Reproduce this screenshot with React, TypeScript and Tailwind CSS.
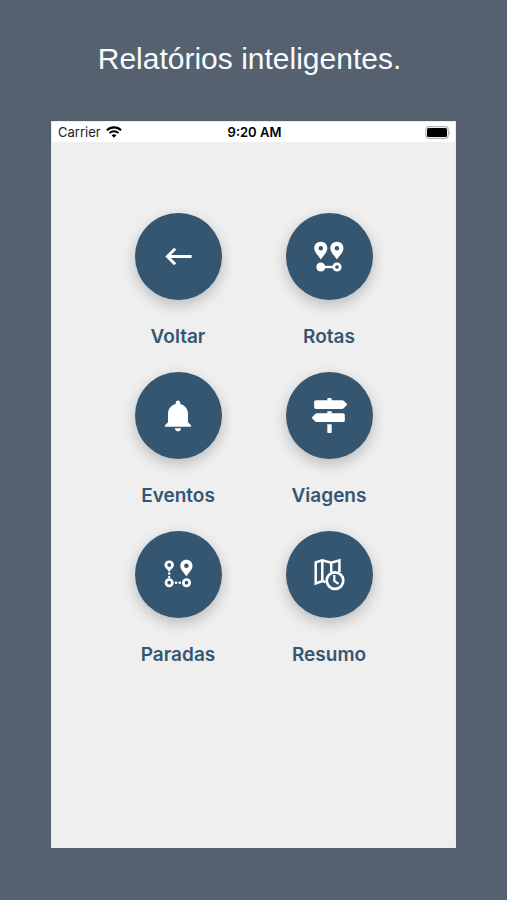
import type { ReactNode } from 'react';
import { FaMapSigns } from 'react-icons/fa';
import { IoMdNotifications } from 'react-icons/io';
import { MdKeyboardBackspace } from 'react-icons/md';

interface MenuItem {
  label: string;
  icon: ReactNode;
}

const RoutesIcon = () => (
  <svg width="35" height="35" viewBox="0 0 35 35" fill="none" aria-hidden="true">
    <path
      fill="currentColor"
      fillRule="evenodd"
      d="M8.8 2.800C5 2.800 2.200 5.600 2.200 9.200c0 4.200 4.400 7.400 6.600 11.400 2.200-4 6.600-7.200 6.600-11.400 0-3.600-2.800-6.400-6.600-6.400zm0 4.100a2.300 2.300 0 1 1 0 4.600 2.300 2.300 0 0 1 0-4.600z"
    />
    <path
      fill="currentColor"
      fillRule="evenodd"
      d="M24.900 2.800c-3.800 0-6.600 2.800-6.600 6.400 0 4.200 4.400 7.400 6.600 11.400 2.200-4 6.600-7.200 6.600-11.400 0-3.600-2.800-6.400-6.600-6.400zm0 4.100a2.300 2.300 0 1 1 0 4.600 2.300 2.300 0 0 1 0-4.600z"
    />
    <circle cx="8.8" cy="28" r="4.500" fill="currentColor" />
    <path d="M12 28h10" stroke="currentColor" strokeWidth="2.400" />
    <circle cx="25" cy="28" r="3.200" stroke="currentColor" strokeWidth="2.700" />
  </svg>
);

const StopsIcon = () => (
  <svg width="35" height="35" viewBox="0 0 35 35" fill="none" aria-hidden="true">
    <path
      fill="currentColor"
      fillRule="evenodd"
      d="M8.2 3.400c-2.600 0-4.700 2-4.700 4.500 0 2.700 3 4.200 4.700 7 1.700-2.800 4.700-4.300 4.700-7 0-2.500-2.100-4.500-4.700-4.500zm0 2.700a1.900 1.900 0 1 1 0 3.800 1.900 1.900 0 0 1 0-3.800z"
    />
    <path
      fill="currentColor"
      fillRule="evenodd"
      d="M25.400 2.700c-3.500 0-6.100 2.600-6.100 6 0 4 4 6.900 6.100 10.700 2.100-3.800 6.100-6.700 6.100-10.700 0-3.400-2.600-6-6.100-6zm0 3.700a2.300 2.300 0 1 1 0 4.600 2.300 2.300 0 0 1 0-4.600z"
    />
    <circle cx="8.2" cy="25.700" r="3.200" stroke="currentColor" strokeWidth="2.700" />
    <circle cx="25.500" cy="25.700" r="3.200" stroke="currentColor" strokeWidth="2.700" />
    <g fill="currentColor">
      <circle cx="8.2" cy="16.500" r="1.200" />
      <circle cx="8.2" cy="20" r="1.200" />
      <circle cx="15" cy="25.700" r="1.300" />
      <circle cx="18.700" cy="25.700" r="1.300" />
    </g>
  </svg>
);

const SummaryIcon = () => (
  <svg
    width="35"
    height="35"
    viewBox="0 0 35 35"
    fill="none"
    stroke="currentColor"
    strokeWidth="2.500"
    aria-hidden="true"
  >
    <path d="M13.500 25 10.300 24 3.700 26.400V5.400L10.300 3.400 19.200 5.700 27.400 3.400V15M10.300 3.400V24M19.200 5.700V15.500" />
    <circle cx="23" cy="23.600" r="8.300" strokeWidth="2.700" />
    <path d="M22.300 18V24L26.500 26.900" strokeWidth="2.200" />
  </svg>
);

const WifiIcon = () => (
  <svg width="16" height="12" viewBox="0 0 16 12" fill="none" aria-label="Wi-Fi">
    <path d="M0.9 4.300a10.200 10.200 0 0 1 14.200 0" stroke="#000" strokeWidth="2.100" />
    <path d="M3.500 7a6.500 6.500 0 0 1 9 0" stroke="#000" strokeWidth="2" />
    <path d="M8 11.800 5.600 9.300a3.500 3.500 0 0 1 4.800 0z" fill="#000" />
  </svg>
);

const BatteryIcon = () => (
  <svg width="26" height="13" viewBox="0 0 26 13" fill="none" aria-label="Battery">
    <rect x="0.700" y="0.700" width="22.600" height="11.600" rx="3" stroke="#b5b5b5" strokeWidth="1.200" />
    <rect x="2" y="2" width="20" height="9" rx="1.500" fill="#000" />
    <path d="M24.300 4.700c1.300.5 1.300 3.100 0 3.600z" fill="#b5b5b5" />
  </svg>
);

const menuItems: MenuItem[] = [
  { label: 'Voltar', icon: <MdKeyboardBackspace size={35} /> },
  { label: 'Rotas', icon: <RoutesIcon /> },
  { label: 'Eventos', icon: <IoMdNotifications size={38} /> },
  { label: 'Viagens', icon: <FaMapSigns size={35} /> },
  { label: 'Paradas', icon: <StopsIcon /> },
  { label: 'Resumo', icon: <SummaryIcon /> },
];

const StatusBar = () => (
  <div className="grid h-5 grid-cols-3 items-center bg-white pr-1 pl-[6px] text-[13px] leading-5 text-[#222]">
    <div className="flex items-center gap-[5px]">
      <span>Carrier</span>
      <WifiIcon />
    </div>
    <span className="text-center font-semibold text-black">9:20 AM</span>
    <div className="flex justify-end">
      <BatteryIcon />
    </div>
  </div>
);

const MenuButton = ({ label, icon }: MenuItem) => (
  <button type="button" className="flex w-[87px] cursor-pointer flex-col items-center gap-6">
    <span className="flex size-[87px] items-center justify-center rounded-full bg-[#345671] text-white shadow-[0_5px_14px_rgba(0,0,0,0.22)]">
      {icon}
    </span>
    <span className="text-[19px] leading-[26px] font-semibold text-[#345671]">{label}</span>
  </button>
);

const App = () => {
  return (
    <div className="flex min-h-screen flex-col bg-[#56616f] px-[51px] pb-[52px] font-['Inter',sans-serif]">
      <h1 className="pt-[41px] pr-2 pb-11 text-center font-['Liberation_Sans',sans-serif] text-[30px] leading-9 text-[#f6fbff]">
        Relatórios inteligentes.
      </h1>

      <div className="flex flex-1 flex-col border border-[#e4ebf1] bg-[#efefef]">
        <StatusBar />
        <main className="grid grid-cols-[auto_auto] justify-center gap-x-16 gap-y-[22px] pt-[71px]">
          {menuItems.map((item) => (
            <MenuButton key={item.label} {...item} />
          ))}
        </main>
      </div>
    </div>
  );
};

export default App;
